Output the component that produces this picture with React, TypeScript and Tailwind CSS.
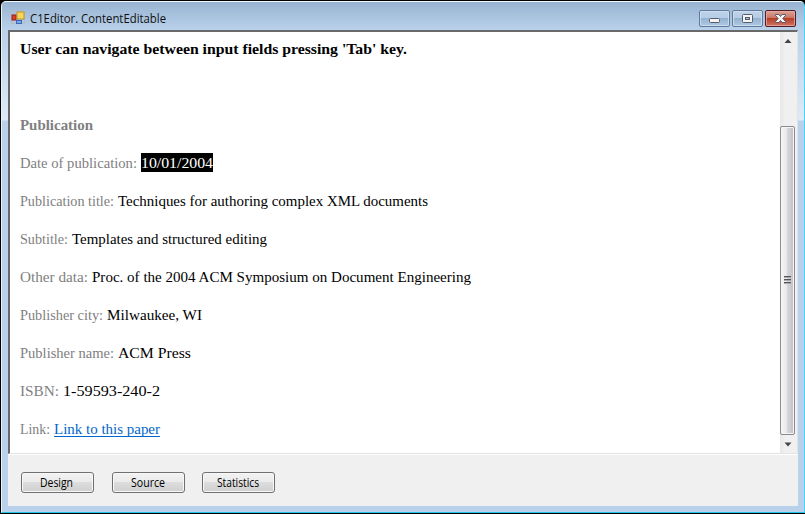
import React from "react";

const rows: { label: string; value: string; w: number; vw: number; kind?: "selected" | "link" }[] = [
  { label: "Date of publication:", value: "10/01/2004", w: 117, vw: 72, kind: "selected" },
  { label: "Publication title:", value: "Techniques for authoring complex XML documents", w: 94, vw: 310 },
  { label: "Subtitle:", value: "Templates and structured editing", w: 48, vw: 195 },
  { label: "Other data:", value: "Proc. of the 2004 ACM Symposium on Document Engineering", w: 68, vw: 379 },
  { label: "Publisher city:", value: "Milwaukee, WI", w: 83, vw: 95 },
  { label: "Publisher name:", value: "ACM Press", w: 94, vw: 73 },
  { label: "ISBN:", value: "1-59593-240-2", w: 39, vw: 97 },
  { label: "Link:", value: "Link to this paper", w: 30, vw: 106, kind: "link" },
];

/* Text fitted to a fixed advance width */
function Run({ text, width, size = 15.5, bold, fill, underline, family = "Liberation Serif, serif", height = 19, base = 15 }: {
  text: string; width: number; size?: number; bold?: boolean; fill: string; underline?: boolean; family?: string; height?: number; base?: number;
}) {
  return (
    <svg width={width} height={height} className="block shrink-0 overflow-visible">
      <text x="0" y={base} textLength={width} lengthAdjust="spacingAndGlyphs" fontSize={size} fontFamily={family} fontWeight={bold ? 700 : 400} fill={fill}>{text}</text>
      {underline && <rect x="0" y={base + 2} width={width} height="1" fill={fill} />}
    </svg>
  );
}

function Caption({ kind }: { kind: "min" | "max" | "close" }) {
  const close = kind === "close";
  return (
    <svg width="31" height="17" className="block">
      <defs>
        <linearGradient id={kind} x2="0" y2="1">
          <stop offset="0" stopColor={close ? "#dba79c" : "#c0d4e9"} />
          <stop offset=".48" stopColor={close ? "#cb7362" : "#b4cce5"} />
          <stop offset=".5" stopColor={close ? "#b63d26" : "#94b2d0"} />
          <stop offset="1" stopColor={close ? "#d2796a" : "#b1cbe5"} />
        </linearGradient>
      </defs>
      <rect x=".5" y=".5" width="30" height="16" rx="1.5" fill={`url(#${kind})`} stroke={close ? "#541c25" : "#60799b"} />
      <rect x="1.5" y="1.5" width="28" height="14" rx="1" fill="none" stroke={close ? "#e5aaa0" : "#d3e2f1"} strokeOpacity=".8" />
      {kind === "min" && <rect x="10.5" y="8.5" width="10" height="4" rx="1" fill="#f4f4f4" stroke="#555c6b" />}
      {kind === "max" && <>
        <rect x="10.5" y="4.5" width="10" height="8" rx="1" fill="#f4f4f4" stroke="#555c6b" />
        <rect x="13.5" y="7.5" width="4" height="2" fill="#a3bdd9" stroke="#555c6b" />
      </>}
      {close && <path d="M10.5 4.5h3.4l1.6 2 1.6-2h3.4v1l-2.7 3 2.7 3v1h-3.4l-1.6-2-1.6 2h-3.4v-1l2.7-3-2.7-3z" fill="#f5f5f5" stroke="#555766" />}
    </svg>
  );
}

function PushButton({ label, width }: { label: string; width: number }) {
  return (
    <button className="flex h-[21px] w-[73px] items-center justify-center rounded-[3px] border border-[#707070] bg-[linear-gradient(#f2f2f2_0%,#ebebeb_48%,#dddddd_50%,#cfcfcf_100%)] pr-[2px] shadow-[inset_0_0_0_1px_#f8f8f8]">
      <Run text={label} width={width} size={12} family="Open Sans, sans-serif" fill="#000" height={15} base={12} />
    </button>
  );
}

export default function App() {
  return (
    <div className="h-[514px] w-[805px] overflow-hidden bg-black pb-px pl-px pt-px">
      <div className="h-[512px] w-[804px] rounded-t-[5px] border-b border-l border-r border-t border-b-[#28c4e8] border-l-[#e8f4fc] border-r-[#45d5f5] border-t-[#f2f7fb] bg-[linear-gradient(#98b4d2_0px,#b9d1ea_28px,#dfeaf6_118px,#b9d1ea_119px)] pl-[6px]">
        <header className="flex h-[28px] w-[790px] items-start">
          <svg width="14" height="14" className="ml-[3px] mt-[9px] shrink-0">
            <rect x=".5" y=".5" width="13" height="12" fill="none" stroke="#b4bdc5" />
            <rect x="1" y="4" width="4" height="5" fill="#d8402c" stroke="#9c1c18" />
            <rect x="6" y="1" width="7" height="7" fill="#f9d75c" stroke="#c0901c" />
            <rect x="5.5" y="9.5" width="5" height="3" fill="#78a7ee" stroke="#3d69b7" />
          </svg>
          <div className="ml-[5px] mt-[8px]"><Run text="C1Editor. ContentEditable" width={136} size={12} family="Open Sans, sans-serif" fill="#101010" height={16} base={13} /></div>
          <div className="ml-auto mr-[2px] mt-[8px] flex gap-[2px]"><Caption kind="min" /><Caption kind="max" /><Caption kind="close" /></div>
        </header>
        <div className="h-[476px] w-[790px] bg-[#f0f0f0]">
          <main className="flex h-[424px] border-b border-l-2 border-r border-t-2 border-b-[#e3e3e3] border-l-[#696969] border-r-[#e3e3e3] border-t-[#696969] bg-white">
            <section className="flex-1 pl-[10px] pt-[7px]">
              <Run text="User can navigate between input fields pressing 'Tab' key." width={387} bold fill="#000" />
              <div className="mt-[57px]"><Run text="Publication" width={73} bold fill="#808080" /></div>
              {rows.map((r) => (
                <div key={r.label} className="mt-[19px] flex h-[19px] gap-[4px]">
                  <Run text={r.label} width={r.w} fill="#808080" />
                  <span className={r.kind === "selected" ? "bg-black" : ""}>
                    <Run text={r.value} width={r.vw} fill={r.kind === "selected" ? "#fff" : r.kind === "link" ? "#0066cc" : "#000"} underline={r.kind === "link"} />
                  </span>
                </div>
              ))}
            </section>
            <aside className="flex w-[17px] flex-col bg-[linear-gradient(90deg,#e7e7e7,#f0f0f0_30%,#f0f0f0)]">
              <svg width="17" height="94" className="shrink-0"><path d="M4.5 11 8 7l3.5 4z" fill="#444" /></svg>
              <div className="flex h-[309px] w-[15px] shrink-0 items-center justify-center rounded-[2px] border border-[#8b8b8f] bg-[linear-gradient(90deg,#f5f5f5_0%,#e9e9eb_42%,#d5d6da_50%,#c0c1c8_100%)] pb-[2px] shadow-[inset_0_0_0_1px_#f5f5f5]">
                <svg width="7" height="8"><path d="M0 .5h7M0 3.5h7M0 6.5h7" stroke="#555" /><path d="M0 1.5h7M0 4.5h7M0 7.5h7" stroke="#aaa" /></svg>
              </div>
              <svg width="17" height="18"><path d="m4.5 7.5 3.5 4 3.5-4z" fill="#444" /></svg>
            </aside>
          </main>
          <footer className="flex border-t border-white pl-[13px] pt-[17px]">
            <PushButton label="Design" width={33} />
            <div className="ml-[18px]"><PushButton label="Source" width={34} /></div>
            <div className="ml-[17px]"><PushButton label="Statistics" width={42} /></div>
          </footer>
        </div>
      </div>
    </div>
  );
}
